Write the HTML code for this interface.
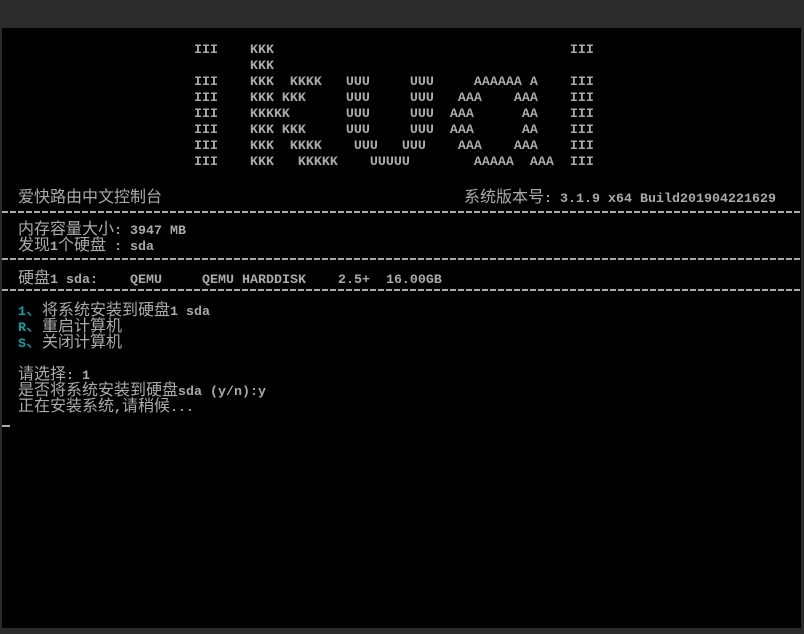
<!DOCTYPE html>
<html><head><meta charset="utf-8"><style>
html,body{margin:0;padding:0;}
body{width:804px;height:634px;background:#2b2b2b;position:relative;overflow:hidden;}
#con{position:absolute;left:2px;top:28px;width:799px;height:600px;background:#000;}
.l{position:absolute;left:0;white-space:pre;font-family:"Liberation Mono",monospace;font-size:13.33px;font-weight:bold;line-height:16px;height:16px;color:#aaa;}
.c{font-family:"Noto Sans CJK SC","WenQuanYi Zen Hei",sans-serif;font-size:16px;font-weight:normal;}
.cy{color:#00aaaa;}
.d{position:absolute;left:0;width:799px;height:2px;background:repeating-linear-gradient(90deg,#aaa 0 6px,transparent 6px 8px);}
</style></head><body>
<div id="con">
<div class="l" style="top:15px">                        III    KKK                                     III</div>
<div class="l" style="top:31px">                               KKK</div>
<div class="l" style="top:47px">                        III    KKK  KKKK   UUU     UUU     AAAAAA A    III</div>
<div class="l" style="top:63px">                        III    KKK KKK     UUU     UUU   AAA    AAA    III</div>
<div class="l" style="top:79px">                        III    KKKKK       UUU     UUU  AAA      AA    III</div>
<div class="l" style="top:95px">                        III    KKK KKK     UUU     UUU  AAA      AA    III</div>
<div class="l" style="top:111px">                        III    KKK  KKKK    UUU   UUU    AAA    AAA    III</div>
<div class="l" style="top:127px">                        III    KKK   KKKKK    UUUUU        AAAAA  AAA  III</div>
<div class="l" style="top:159px;left:16px"><span class="c">爱快路由中文控制台</span></div>
<div class="l" style="top:159px;left:auto;right:25px"><span class="c">系统版本号</span>: 3.1.9 x64 Build201904221629</div>
<div class="d" style="top:183px"></div>
<div class="l" style="top:191px;left:16px"><span class="c">内存容量大小</span>: 3947 MB</div>
<div class="l" style="top:207px;left:16px"><span class="c">发现</span>1<span class="c">个硬盘</span> : sda</div>
<div class="d" style="top:230px"></div>
<div class="l" style="top:240px;left:16px"><span class="c">硬盘</span>1 sda:    QEMU     QEMU HARDDISK    2.5+  16.00GB</div>
<div class="d" style="top:261px"></div>
<div class="l" style="top:272px;left:16px"><span class="cy">1<span class="c">、</span></span><span class="c">将系统安装到硬盘</span>1 sda</div>
<div class="l" style="top:288px;left:16px"><span class="cy">R<span class="c">、</span></span><span class="c">重启计算机</span></div>
<div class="l" style="top:304px;left:16px"><span class="cy">S<span class="c">、</span></span><span class="c">关闭计算机</span></div>
<div class="l" style="top:336px;left:16px"><span class="c">请选择</span>: 1</div>
<div class="l" style="top:352px;left:16px"><span class="c">是否将系统安装到硬盘</span>sda (y/n):y</div>
<div class="l" style="top:368px;left:16px"><span class="c">正在安装系统</span>,<span class="c">请稍候</span>...</div>
<div style="position:absolute;left:0;top:397px;width:8px;height:2px;background:#aaa"></div>
</div>
</body></html>
